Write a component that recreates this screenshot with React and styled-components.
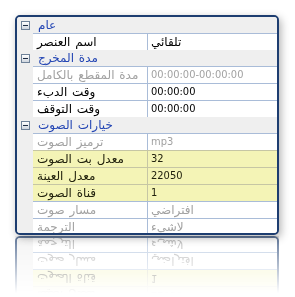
import React from 'react';
import styled, { createGlobalStyle } from 'styled-components';

const Global = createGlobalStyle`
  html, body {
    margin: 0;
    padding: 0;
    background: #ffffff;
  }
  body {
    font-family: "DejaVu Sans Condensed", "DejaVu Sans", sans-serif;
    font-size: 11px;
  }
`

const Page = styled.div`
  padding: 15px 0 0 15px;
  width: 295px;
  height: 297px;
  box-sizing: border-box;
`
const Grid = styled.div`
  width: 264px;
  height: 220px;
  box-sizing: border-box;
  border: 2px solid #1d3d70;
  border-radius: 5px;
  overflow: hidden;
  background: #efefef;
  box-shadow: 2px 3px 9px rgba(0, 0, 0, 0.3);
  -webkit-box-reflect: below 1px linear-gradient(to bottom, transparent 74%, rgba(255, 255, 255, 0.7));
`
const Category = styled.div`
  display: flex;
  align-items: center;
  height: 16px;
  background: #efefef;
`
const Toggle = styled.div`
  width: 16px;
  display: flex;
  justify-content: center;
  align-items: center;
`
const MinusBox = styled.div`
  position: relative;
  width: 7px;
  height: 7px;
  border: 1px solid #6f8299;
  background: linear-gradient(#ffffff, #cfd6df);
  &::after {
    content: "";
    position: absolute;
    left: 1px;
    top: 3px;
    width: 5px;
    height: 1px;
    background: #1e2c44;
  }
`
const CategoryTitle = styled.div`
  padding-left: 5px;
  color: #2446b4;
  font-family: "DejaVu Sans", sans-serif;
  font-size: 12px;
  word-spacing: 1px;
  line-height: 16px;
`
const Row = styled.div`
  display: flex;
  height: 17px;
`
const Gutter = styled.div`
  width: 16px;
  flex: none;
  background: #efefef;
`
const Cell = styled.div`
  box-sizing: border-box;
  display: flex;
  justify-content: flex-start;
  align-items: center;
  height: 17px;
  border-top: 1px solid ${p => (p.$hl ? '#c6c6a4' : '#a9bcd8')};
  background: ${p => (p.$hl ? '#f4f4b6' : '#ffffff')};
  color: ${p => (p.$muted ? '#a2a2a2' : p.$hl ? '#22220e' : '#000000')};
  padding-left: 4px;
  white-space: nowrap;
  overflow: hidden;
`
const Label = styled(Cell)`
  width: 115px;
  flex: none;
  font-family: "DejaVu Sans", sans-serif;
  font-size: 12px;
  word-spacing: 1px;
  border-right: 1px solid ${p => (p.$hl ? '#c6c6a4' : '#a9bcd8')};
`
const Value = styled(Cell)`
  flex: 1;
  padding-left: 3px;
  font-size: ${p => (p.$ar ? '12px' : '11px')};
  font-family: ${p => (p.$ar ? '"DejaVu Sans", sans-serif' : 'inherit')};
`
const Text = styled.span`
  flex: none;
  line-height: 16px;
`

const sections = [
  {
    title: 'عام',
    rows: [{ label: 'اسم العنصر', value: 'تلقائي', ar: true }],
  },
  {
    title: 'مدة المخرج',
    rows: [
      { label: 'مدة المقطع بالكامل', value: '00:00:00-00:00:00', muted: true },
      { label: 'وقت الدبء', value: '00:00:00' },
      { label: 'وقت التوقف', value: '00:00:00' },
    ],
  },
  {
    title: 'خيارات الصوت',
    rows: [
      { label: 'ترميز الصوت', value: 'mp3', muted: true },
      { label: 'معدل بت الصوت', value: '32', hl: true },
      { label: 'معدل العينة', value: '22050', hl: true },
      { label: 'قناة الصوت', value: '1', hl: true },
      { label: 'مسار صوت', value: 'افتراضي', muted: true, ar: true },
      { label: 'الترجمة', value: 'لاشيء', muted: true, ar: true },
    ],
  },
];

function App() {
  return (
    <Page>
      <Global />
      <Grid>
        {sections.map(s => (
          <React.Fragment key={s.title}>
            <Category>
              <Toggle><MinusBox /></Toggle>
              <CategoryTitle>{s.title}</CategoryTitle>
            </Category>
            {s.rows.map(r => (
              <Row key={r.label}>
                <Gutter />
                <Label $hl={r.hl} $muted={r.muted}><Text>{r.label}</Text></Label>
                <Value $hl={r.hl} $muted={r.muted} $ar={r.ar}><Text>{r.value}</Text></Value>
              </Row>
            ))}
          </React.Fragment>
        ))}
      </Grid>
    </Page>
  );
}

export default App;
